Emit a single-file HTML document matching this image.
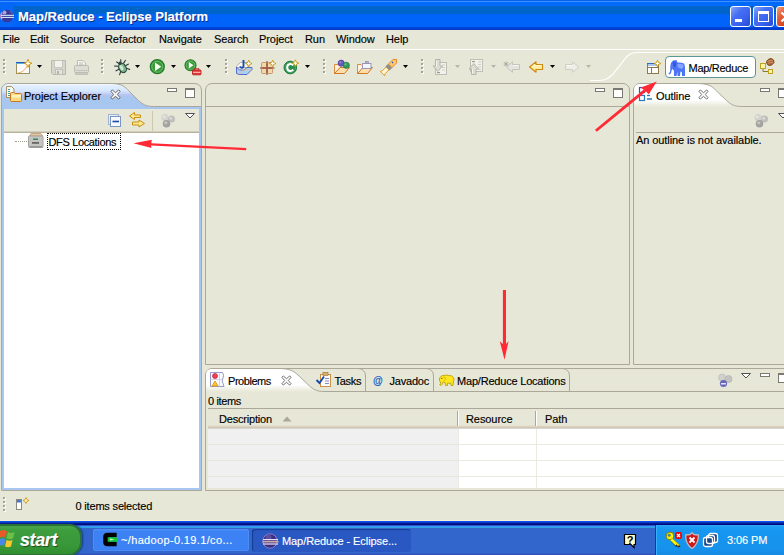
<!DOCTYPE html>
<html><head><meta charset="utf-8"><title>Map/Reduce - Eclipse Platform</title>
<style>
*{box-sizing:border-box;margin:0;padding:0}
html,body{width:784px;height:555px;overflow:hidden;background:#E6E7D6}
body{position:relative;font-family:"Liberation Sans",sans-serif;font-size:11px;color:#000;letter-spacing:-0.08px;-webkit-text-stroke-width:0.15px}
.a{position:absolute}
.t{position:absolute;white-space:nowrap;line-height:13px}
#title{left:0;top:0;width:784px;height:30px;background:linear-gradient(#0862F0 0,#0862F0 1px,#3C90FF 1px,#3C90FF 2.500px,#006AFA 2.500px,#006AFA 6px,#0065CB 6px,#0065CB 14.500px,#0063FA 14.500px,#0063FA 27px,#0046DC 27px,#0038C8 30px)}
#title .tt{left:18px;top:9px;font-family:"Liberation Sans",sans-serif;font-weight:bold;font-size:13px;color:#fff;line-height:16px;letter-spacing:0;text-shadow:1px 1px 0 #0A2A80}
#menu{left:0;top:30px;width:784px;height:19px;background:#E6E7D6}
#menuline{left:0;top:49px;width:784px;height:1px;background:#fff}
.pb{position:absolute;border:1px solid #ACA899;background:#E6E7D6}
</style></head><body>

<!-- title bar -->
<div id="title" class="a">
  <div class="a" style="left:0;top:2px;width:14px;height:25px;background:#0467F8"></div>
  <svg class="a" style="left:0;top:9px" width="16" height="16" viewBox="0 0 16 16"><circle cx="7" cy="7" r="6.300" fill="#38389A"/><path d="M2 3.500A6.300 6.300 0 0 0 2 10.500" fill="none" stroke="#D890C8" stroke-width="1.400"/><circle cx="4.500" cy="3.500" r="2" fill="#C8C0E0" opacity="0.800"/><rect x="1" y="5.800" width="13" height="1.100" fill="#D8ECF8"/><rect x="1" y="7.900" width="13" height="1.100" fill="#C8E4F4"/><path d="M10 2L12.500 4.500" stroke="#5C5CB8" stroke-width="1.500"/></svg>
  <div class="t tt">Map/Reduce - Eclipse Platform</div>
  <div class="a" style="left:730px;top:6px;width:21px;height:21px;border:1px solid #fff;border-radius:3px;background:linear-gradient(135deg,#86A6FA 0,#4670F2 35%,#3860EC 70%,#2448D0)"><div class="a" style="left:4px;top:12px;width:7px;height:3px;background:#fff"></div></div>
  <div class="a" style="left:753px;top:6px;width:21px;height:21px;border:1px solid #fff;border-radius:3px;background:linear-gradient(135deg,#86A6FA 0,#4670F2 35%,#3860EC 70%,#2448D0)"><div class="a" style="left:4px;top:4px;width:11px;height:11px;border:1px solid #fff;border-top-width:3px"></div></div>
  <div class="a" style="left:776px;top:6px;width:21px;height:21px;border:1px solid #fff;border-radius:3px;background:linear-gradient(135deg,#F0A080 0,#E05C38 35%,#D04420 70%,#B03010)"><svg class="a" style="left:3px;top:4px" width="12" height="12" viewBox="0 0 12 12"><path d="M1.500 1.500L10.500 10.500M10.500 1.500L1.500 10.500" stroke="#fff" stroke-width="2.200"/></svg></div>
</div>

<!-- menu -->
<div id="menu" class="a">
  <div class="t" style="left:2.5px;top:3px">File</div>
  <div class="t" style="left:30px;top:3px">Edit</div>
  <div class="t" style="left:60px;top:3px">Source</div>
  <div class="t" style="left:105px;top:3px">Refactor</div>
  <div class="t" style="left:159px;top:3px">Navigate</div>
  <div class="t" style="left:214px;top:3px">Search</div>
  <div class="t" style="left:259px;top:3px">Project</div>
  <div class="t" style="left:305px;top:3px">Run</div>
  <div class="t" style="left:336px;top:3px">Window</div>
  <div class="t" style="left:386px;top:3px">Help</div>
</div>
<div id="menuline" class="a"></div>

<!-- toolbar -->
<div class="a" style="left:4px;top:60px;width:2px;height:2px;background:#fff"></div><div class="a" style="left:3px;top:59px;width:2px;height:2px;background:#A5A293"></div><div class="a" style="left:4px;top:64px;width:2px;height:2px;background:#fff"></div><div class="a" style="left:3px;top:63px;width:2px;height:2px;background:#A5A293"></div><div class="a" style="left:4px;top:68px;width:2px;height:2px;background:#fff"></div><div class="a" style="left:3px;top:67px;width:2px;height:2px;background:#A5A293"></div><div class="a" style="left:4px;top:72px;width:2px;height:2px;background:#fff"></div><div class="a" style="left:3px;top:71px;width:2px;height:2px;background:#A5A293"></div>
<div class="a" style="left:102px;top:60px;width:2px;height:2px;background:#fff"></div><div class="a" style="left:101px;top:59px;width:2px;height:2px;background:#A5A293"></div><div class="a" style="left:102px;top:64px;width:2px;height:2px;background:#fff"></div><div class="a" style="left:101px;top:63px;width:2px;height:2px;background:#A5A293"></div><div class="a" style="left:102px;top:68px;width:2px;height:2px;background:#fff"></div><div class="a" style="left:101px;top:67px;width:2px;height:2px;background:#A5A293"></div><div class="a" style="left:102px;top:72px;width:2px;height:2px;background:#fff"></div><div class="a" style="left:101px;top:71px;width:2px;height:2px;background:#A5A293"></div>
<div class="a" style="left:226px;top:60px;width:2px;height:2px;background:#fff"></div><div class="a" style="left:225px;top:59px;width:2px;height:2px;background:#A5A293"></div><div class="a" style="left:226px;top:64px;width:2px;height:2px;background:#fff"></div><div class="a" style="left:225px;top:63px;width:2px;height:2px;background:#A5A293"></div><div class="a" style="left:226px;top:68px;width:2px;height:2px;background:#fff"></div><div class="a" style="left:225px;top:67px;width:2px;height:2px;background:#A5A293"></div><div class="a" style="left:226px;top:72px;width:2px;height:2px;background:#fff"></div><div class="a" style="left:225px;top:71px;width:2px;height:2px;background:#A5A293"></div>
<div class="a" style="left:324px;top:60px;width:2px;height:2px;background:#fff"></div><div class="a" style="left:323px;top:59px;width:2px;height:2px;background:#A5A293"></div><div class="a" style="left:324px;top:64px;width:2px;height:2px;background:#fff"></div><div class="a" style="left:323px;top:63px;width:2px;height:2px;background:#A5A293"></div><div class="a" style="left:324px;top:68px;width:2px;height:2px;background:#fff"></div><div class="a" style="left:323px;top:67px;width:2px;height:2px;background:#A5A293"></div><div class="a" style="left:324px;top:72px;width:2px;height:2px;background:#fff"></div><div class="a" style="left:323px;top:71px;width:2px;height:2px;background:#A5A293"></div>
<div class="a" style="left:422px;top:60px;width:2px;height:2px;background:#fff"></div><div class="a" style="left:421px;top:59px;width:2px;height:2px;background:#A5A293"></div><div class="a" style="left:422px;top:64px;width:2px;height:2px;background:#fff"></div><div class="a" style="left:421px;top:63px;width:2px;height:2px;background:#A5A293"></div><div class="a" style="left:422px;top:68px;width:2px;height:2px;background:#fff"></div><div class="a" style="left:421px;top:67px;width:2px;height:2px;background:#A5A293"></div><div class="a" style="left:422px;top:72px;width:2px;height:2px;background:#fff"></div><div class="a" style="left:421px;top:71px;width:2px;height:2px;background:#A5A293"></div>
<svg class="a" style="left:37px;top:65px" width="5" height="3" viewBox="0 0 5 3"><path d="M0 0H5L2.500 3Z" fill="#000"/></svg>
<svg class="a" style="left:135px;top:65px" width="5" height="3" viewBox="0 0 5 3"><path d="M0 0H5L2.500 3Z" fill="#000"/></svg>
<svg class="a" style="left:171px;top:65px" width="5" height="3" viewBox="0 0 5 3"><path d="M0 0H5L2.500 3Z" fill="#000"/></svg>
<svg class="a" style="left:206px;top:65px" width="5" height="3" viewBox="0 0 5 3"><path d="M0 0H5L2.500 3Z" fill="#000"/></svg>
<svg class="a" style="left:305px;top:65px" width="5" height="3" viewBox="0 0 5 3"><path d="M0 0H5L2.500 3Z" fill="#000"/></svg>
<svg class="a" style="left:403px;top:65px" width="5" height="3" viewBox="0 0 5 3"><path d="M0 0H5L2.500 3Z" fill="#000"/></svg>
<svg class="a" style="left:550px;top:65px" width="5" height="3" viewBox="0 0 5 3"><path d="M0 0H5L2.500 3Z" fill="#000"/></svg>
<svg class="a" style="left:455px;top:65px" width="5" height="3" viewBox="0 0 5 3"><path d="M0 0H5L2.500 3Z" fill="#B8B5A8"/></svg>
<svg class="a" style="left:491px;top:65px" width="5" height="3" viewBox="0 0 5 3"><path d="M0 0H5L2.500 3Z" fill="#B8B5A8"/></svg>
<svg class="a" style="left:586px;top:65px" width="5" height="3" viewBox="0 0 5 3"><path d="M0 0H5L2.500 3Z" fill="#B8B5A8"/></svg>
<svg class="a" style="left:15px;top:58px" width="18" height="18" viewBox="0 0 18 18"><rect x="1.500" y="4.500" width="13" height="11" fill="#FAFAFF" stroke="#9A9060"/><rect x="1" y="4" width="14" height="1" fill="#2A58B8"/><rect x="1" y="5" width="14" height="1" fill="#58B0D8"/><path d="M3 15Q10 14 12.500 7" fill="none" stroke="#F0B850" stroke-width="1"/><path d="M13 1.300L14.100 4.200L17 5.300L14.100 6.400L13 9.300L11.900 6.400L9 5.300L11.900 4.200Z" fill="#FFE890" stroke="#D09818" stroke-width="1"/><path d="M13 3.300V7.300M11 5.300H15" stroke="#fff" stroke-width="1"/></svg>
<svg class="a" style="left:50px;top:59px" width="17" height="17" viewBox="0 0 17 17"><path d="M1.500 1.500H15.500V15.500H3L1.500 14Z" fill="#D6D6CE" stroke="#B8B8AE"/><rect x="4.500" y="1.500" width="8" height="7" fill="#F2F2EC" stroke="#C0C0B6" stroke-width="0.800"/><rect x="5.500" y="10.500" width="7" height="5" fill="#E4E4DC" stroke="#B8B8AE" stroke-width="0.800"/><rect x="7" y="12" width="2" height="3" fill="#B4B4AA"/></svg>
<svg class="a" style="left:73px;top:59px" width="17" height="17" viewBox="0 0 17 17"><path d="M4.500 7V1.500H10L12.500 4V7" fill="#F6F6F0" stroke="#BCBCB2"/><rect x="1.500" y="6.500" width="14" height="7" rx="1" fill="#DCDCD4" stroke="#BCBCB2"/><rect x="2.500" y="13.500" width="12" height="2" fill="#CACAC2" stroke="#BCBCB2" stroke-width="0.800"/><path d="M6 4H10M6 5.800H10.500" stroke="#B0B0A6" stroke-width="0.800"/><rect x="2.500" y="11" width="12" height="1" fill="#C4C4BA"/></svg>
<svg class="a" style="left:113px;top:58px" width="18" height="18" viewBox="0 0 18 18"><g transform="rotate(-28 9 9)"><g stroke="#1C2A30" stroke-width="1" fill="none"><path d="M6 6.500L2.500 4.500M5.500 9.500H1.500M6 12L3 15M12 6.500L15.500 4.500M12.500 9.500H16.500M12 12L15 15M7.800 4.500L6.500 1.500M10.200 4.500L11.500 1.500"/></g><ellipse cx="9" cy="10" rx="3.600" ry="5" fill="#78B088" stroke="#24443A"/><ellipse cx="8.300" cy="9.500" rx="1.600" ry="2.800" fill="#D0ECD0"/><circle cx="9" cy="4.800" r="1.700" fill="#2C4838"/></g></svg>
<svg class="a" style="left:149px;top:58px" width="17" height="17" viewBox="0 0 17 17"><circle cx="8.300" cy="8.700" r="7" fill="#399A3A" stroke="#24782A" stroke-width="1.200"/><circle cx="8.300" cy="8.700" r="5.500" fill="none" stroke="#6CBC68" stroke-width="1"/><path d="M6 4.400L12.300 8.700L6 13Z" fill="#F4FFF0"/></svg>
<svg class="a" style="left:183px;top:58px" width="20" height="18" viewBox="0 0 20 18"><circle cx="7.500" cy="7.200" r="5.500" fill="#399A3A" stroke="#24782A" stroke-width="1.100"/><circle cx="7.500" cy="7.200" r="4.100" fill="none" stroke="#6CBC68" stroke-width="0.900"/><path d="M5.800 4L10.500 7.200L5.800 10.400Z" fill="#F4FFF0"/><rect x="9.500" y="12" width="8.500" height="4.800" rx="0.800" fill="#E03838" stroke="#B82020" stroke-width="0.900"/><path d="M11.800 12V10.700H15.700V12" fill="none" stroke="#C02828" stroke-width="1.100"/><rect x="10" y="13.800" width="7.500" height="1" fill="#FFC8C8"/></svg>
<svg class="a" style="left:235px;top:58px" width="19" height="18" viewBox="0 0 19 18"><path d="M1.500 8L5.500 4.500H13V9.500H1.500Z" fill="#FFFBE8" stroke="#9AA0B8" stroke-width="0.800"/><path d="M1.500 9V15.500L4 16.500H12L17 11.500V9.500H12L9 12H4.500L1.500 9Z" fill="#A8D0F4" stroke="#4A60C8" stroke-width="0.900"/><path d="M3.500 16L8.500 12H16.500" fill="none" stroke="#E8C080" stroke-width="0.800"/><path d="M8.500 2V8Q8.500 9.800 6.800 9.800Q5.300 9.800 5.300 8.300" fill="none" stroke="#1C4CB0" stroke-width="1.900"/><path d="M13.7 2.2L14.6 4.6L17.0 5.5L14.6 6.4L13.7 8.8L12.799999999999999 6.4L10.399999999999999 5.5L12.799999999999999 4.6Z" fill="#FFE478" stroke="#C89818" stroke-width="1"/><path d="M13.7 3.7V7.3M11.899999999999999 5.5H15.5" stroke="#fff" stroke-width="1"/></svg>
<svg class="a" style="left:259px;top:58px" width="19" height="18" viewBox="0 0 19 18"><rect x="2.500" y="4.500" width="5" height="5" rx="1" fill="#F0D8A8" stroke="#C09060" stroke-width="0.900"/><rect x="8.500" y="4.500" width="5" height="5" rx="1" fill="#F0D8A8" stroke="#C09060" stroke-width="0.900"/><rect x="2.500" y="10.500" width="5" height="5" rx="1" fill="#F0D8A8" stroke="#C09060" stroke-width="0.900"/><rect x="8.500" y="10.500" width="5" height="5" rx="1" fill="#F0D8A8" stroke="#C09060" stroke-width="0.900"/><path d="M8 3V17M1 10H15.500" stroke="#8A3030" stroke-width="1"/><path d="M13.7 2.2L14.6 4.6L17.0 5.5L14.6 6.4L13.7 8.8L12.799999999999999 6.4L10.399999999999999 5.5L12.799999999999999 4.6Z" fill="#FFE478" stroke="#C89818" stroke-width="1"/><path d="M13.7 3.7V7.3M11.899999999999999 5.5H15.5" stroke="#fff" stroke-width="1"/></svg>
<svg class="a" style="left:282px;top:58px" width="20" height="18" viewBox="0 0 20 18"><circle cx="8.300" cy="9.500" r="6.300" fill="#2C8E4C" stroke="#1E7A3C" stroke-width="1"/><circle cx="8.300" cy="9.500" r="5" fill="none" stroke="#58B474" stroke-width="0.800"/><path d="M11.300 7.300Q10 5.800 8.200 5.900Q5.200 6.200 5.200 9.500Q5.200 12.800 8.200 13.100Q10 13.200 11.300 11.700" fill="none" stroke="#fff" stroke-width="2"/><path d="M13.4 1.9000000000000004L14.3 4.3L16.7 5.2L14.3 6.1000000000000005L13.4 8.5L12.5 6.1000000000000005L10.100000000000001 5.2L12.5 4.3Z" fill="#FFE478" stroke="#C89818" stroke-width="1"/><path d="M13.4 3.4000000000000004V7.0M11.6 5.2H15.200000000000001" stroke="#fff" stroke-width="1"/></svg>
<svg class="a" style="left:333px;top:58px" width="19" height="18" viewBox="0 0 19 18"><path d="M1.500 15.500V6.500H5L6 7.500H12.500V10H7Z" fill="#FFF2D8" stroke="#D88030" stroke-width="0.900"/><path d="M1.500 15.500L7 9.500H16.500L11.500 15.500Z" fill="#FFDCA8" stroke="#D07828" stroke-width="1"/><circle cx="8.200" cy="5.200" r="3.100" fill="#6A58B8" stroke="#4A3C98" stroke-width="0.700"/><circle cx="7.400" cy="4.300" r="1.100" fill="#9888D8"/><circle cx="13.300" cy="7.300" r="3.100" fill="#2E9A58" stroke="#1E7A40" stroke-width="0.700"/><circle cx="12.500" cy="6.400" r="1.100" fill="#68C088"/></svg>
<svg class="a" style="left:356px;top:58px" width="19" height="18" viewBox="0 0 19 18"><path d="M1.500 15.500V6.500H5L6 7.500H12.500V10H7Z" fill="#FFF2D8" stroke="#D88030" stroke-width="0.900"/><path d="M1.500 15.500L7 9.500H16.500L11.500 15.500Z" fill="#FFDCA8" stroke="#D07828" stroke-width="1"/><rect x="6.500" y="5.500" width="8.500" height="5" fill="#F4F4FF" stroke="#9090B8" stroke-width="0.900"/><rect x="9.300" y="3.300" width="3" height="2.200" fill="#B0B0D0" stroke="#8888B0" stroke-width="0.600"/></svg>
<svg class="a" style="left:380px;top:57px" width="19" height="19" viewBox="0 0 19 19"><g transform="rotate(-45 9.500 9.500)"><path d="M-0.500 6.500L1.500 7.500H7V11.500H1.500L-0.500 12.500Z" fill="#FFF8D0" stroke="#E09020" stroke-width="0.900"/><rect x="7" y="7" width="3.500" height="5" fill="#909090" stroke="#707070" stroke-width="0.600"/><path d="M10.500 7H17L19.500 9.500L17 12H10.500Z" fill="#FFC878" stroke="#E08818" stroke-width="0.900"/><circle cx="14.500" cy="8.800" r="0.800" fill="#2050C0"/></g></svg>
<svg class="a" style="left:432px;top:58px" width="18" height="18" viewBox="0 0 18 18"><rect x="3.500" y="4.500" width="11" height="12" fill="#F2F2EC" stroke="#BEBEB4"/><path d="M10 7H13M10 9.500H13M10 12H13" stroke="#C8C8BE" stroke-width="0.900"/><rect x="5" y="14" width="3" height="1.200" fill="#9A9A90"/><path d="M3.500 1.500H8V8H10.500L5.800 13.500L1 8H3.500Z" fill="#DCDCD4" stroke="#B0B0A4" stroke-width="0.900"/><path d="M4.500 2.500V8.500" stroke="#F4F4EE" stroke-width="1"/></svg>
<svg class="a" style="left:468px;top:58px" width="18" height="18" viewBox="0 0 18 18"><rect x="2.500" y="1.500" width="12" height="12" fill="#F2F2EC" stroke="#BEBEB4"/><path d="M10 4H13M10 6.500H13M10 9H13M10 11.500H13" stroke="#C8C8BE" stroke-width="0.900"/><rect x="4" y="3" width="3" height="1.200" fill="#9A9A90"/><path d="M3.500 16.500H8V11H10.500L5.800 5.500L1 11H3.500Z" fill="#DCDCD4" stroke="#B0B0A4" stroke-width="0.900"/><path d="M4.500 15.500V10.500" stroke="#F4F4EE" stroke-width="1"/></svg>
<svg class="a" style="left:502px;top:59px" width="20" height="16" viewBox="0 0 20 16"><path d="M17.500 5.500H10.500V2.800L4.300 8L10.500 13.200V10.500H17.500Z" fill="#E4E4DE" stroke="#C4C4BA" stroke-width="1" stroke-linejoin="round"/><path d="M10.500 6.500H16.500" stroke="#F6F6F2" stroke-width="1"/><path d="M2 3L6 7M6 3L2 7M4 2.500V7.500M1.500 5H6.500" stroke="#A4A49A" stroke-width="0.700"/></svg>
<svg class="a" style="left:527px;top:59px" width="18" height="16" viewBox="0 0 18 16"><defs><linearGradient id="yg" x1="0" y1="0" x2="0" y2="1"><stop offset="0" stop-color="#FFFDF0"/><stop offset="0.500" stop-color="#FFF0A8"/><stop offset="1" stop-color="#FFD860"/></linearGradient></defs><path d="M15.500 5.500H9V2.800L2.600 8L9 13.200V10.500H15.500Z" fill="url(#yg)" stroke="#D08A10" stroke-width="1.200" stroke-linejoin="round"/></svg>
<svg class="a" style="left:564px;top:59px" width="18" height="16" viewBox="0 0 18 16"><path d="M1.500 5.500H8.500V2.800L14.900 8L8.500 13.200V10.500H1.500Z" fill="#EEEEE8" stroke="#CECEC4" stroke-width="1" stroke-linejoin="round"/><path d="M2.500 6.500H9" stroke="#FAFAF6" stroke-width="1"/></svg>
<svg class="a" style="left:585px;top:50px" width="199" height="34" viewBox="0 0 199 34"><path d="M5 30.500H14C22 30.500 25 27 28 24L42 6.500C45 3.500 47 2.500 52 2.500H199" fill="none" stroke="#fff" stroke-width="1.200"/></svg>
<svg class="a" style="left:644px;top:58px" width="18" height="18" viewBox="0 0 18 18"><rect x="3.500" y="5.500" width="11" height="10" fill="#FCFCF8" stroke="#8A7850"/><path d="M3.500 9.500H14.500M7.500 9.500V15.500" stroke="#8A7850" stroke-width="1"/><rect x="3" y="5" width="12" height="1" fill="#3868C0"/><rect x="4" y="6" width="10" height="2" fill="#A8C8F0"/><path d="M13.5 2.2L14.4 4.6L16.8 5.5L14.4 6.4L13.5 8.8L12.6 6.4L10.2 5.5L12.6 4.6Z" fill="#FFE478" stroke="#C89818" stroke-width="1"/><path d="M13.5 3.7V7.3M11.7 5.5H15.3" stroke="#fff" stroke-width="1"/></svg>
<div class="a" style="left:665px;top:56px;width:91px;height:22px;border:1px solid #5C9698;border-radius:4px;background:#fff"></div>
<svg class="a" style="left:668px;top:59px" width="19" height="18" viewBox="0 0 19 18"><path d="M5 1.500L8.500 1L9.500 3.500Q13 3 16 4.500Q17.500 7 17 11L17 17H14L13.800 13L12.500 12.500L12 17H9.500L9.300 12.500L8.500 17H6L6 11.500Q4.500 11 4.200 9.500Q3.500 12 2.800 14.500L1 15.500L0.500 14.500L2 13Q2.500 10 2.300 7Q2.500 3.500 5 1.500Z" fill="#4C74F6"/><path d="M5 3Q7.500 1.500 8 4.500Q8.500 7.500 6.500 8.500Q4.500 7 5 3Z" fill="#3058E8"/><path d="M9.500 5Q13 4 15.500 6Q16 8.500 14 10Q11 9.500 9.500 8Z" fill="#86A4FF"/><circle cx="4" cy="7" r="0.700" fill="#A08888"/></svg>
<div class="t" style="left:688.500px;top:62px;letter-spacing:-0.280px">Map/Reduce</div>
<svg class="a" style="left:759px;top:58px" width="18" height="18" viewBox="0 0 18 18"><path d="M4 8V13.500H9.500" fill="none" stroke="#8A7A30" stroke-width="1"/><rect x="1.500" y="5.500" width="5" height="5" fill="#FFF4A8" stroke="#C0A020"/><rect x="9.500" y="11.500" width="4" height="4" fill="#FFF4A8" stroke="#C0A020"/><ellipse cx="11.300" cy="4" rx="3.800" ry="3.300" transform="rotate(-30 11.300 4)" fill="#A86838" stroke="#784018" stroke-width="0.800"/><path d="M8.500 3.500Q11 1.500 14 3M8.800 5.500Q11.500 3.500 14.300 5" stroke="#E0A878" stroke-width="0.700" fill="none"/></svg>

<!-- left panel: Project Explorer -->
<div class="a" style="left:1px;top:83px;width:201px;height:408px;border:1px solid #ACA899;border-radius:7px 7px 0 0;background:#A7C6F0"></div>
<div class="a" style="left:2px;top:84px;width:199px;height:25px;border-radius:6px 6px 0 0;background:linear-gradient(#fff 0,#E4F0FF 1px,#D4E6FF 7px,#C8D4F8 9px,#B8C4F0 11px,#A7C6F0 13px)"></div>
<svg class="a" style="left:110px;top:83px" width="92" height="25" viewBox="0 0 92 25"><path d="M0 0.500C10 0.500 14 2.500 17.500 6.500L28.500 17.500C32.500 21 35.500 23.500 43.500 23.500H92V0H0Z" fill="#E6E7D6"/><path d="M0 0.500C10 0.500 14 2.500 17.500 6.500L28.500 17.500C32.500 21 35.500 23.500 43.500 23.500H91" fill="none" stroke="#ACA899" stroke-width="1"/><path d="M0 0.500H84Q91.500 0.500 91.500 8V25" fill="none" stroke="#ACA899"/></svg>
<div class="a" style="left:4px;top:109px;width:195px;height:24px;background:linear-gradient(#E6E7D6 0,#E6E7D6 22px,#D2D0BC 22px,#D2D0BC 23px,#B6B39E 23px)"></div>
<div class="a" style="left:4px;top:133px;width:195px;height:355px;background:#fff"></div>
<svg class="a" style="left:5px;top:85px" width="18" height="18" viewBox="0 0 18 18"><path d="M1.500 1.500H6.500L9 4V12.500H1.500Z" fill="#FAFAF0" stroke="#A08850" stroke-width="0.900"/><path d="M3 4.500H5M3 6.500H5M3 8.500H5M3 10.500H5" stroke="#3AA0B8" stroke-width="1"/><path d="M5.500 8.500Q5.500 7.500 6.500 7.500H9L10 8.500H15.500Q16.500 8.500 16.500 9.500V15.500Q16.500 16.500 15.500 16.500H6.500Q5.500 16.500 5.500 15.500Z" fill="#FFD880" stroke="#C87818" stroke-width="1"/><rect x="6.500" y="10" width="9.500" height="2.500" fill="#FFF4C0"/></svg>
<div class="t" style="left:24px;top:90px">Project Explorer</div>
<svg class="a" style="left:109.5px;top:89px" width="11" height="11" viewBox="0 0 12 12"><path d="M1 2.500L2.500 1L6 4L9.500 1L11 2.500L8 6L11 9.500L9.500 11L6 8L2.500 11L1 9.500L4 6Z" fill="#fff" stroke="#555" stroke-width="1"/></svg>
<div class="a" style="left:167px;top:88px;width:10px;height:4px;border:1px solid #7A7870;background:#fff"></div>
<div class="a" style="left:185px;top:88px;width:10px;height:10px;border:1px solid #7A7870;border-top-width:2px;background:#fff"></div>
<!-- panel toolbar -->
<svg class="a" style="left:107px;top:113px" width="16" height="15" viewBox="0 0 16 15"><rect x="1.500" y="1.500" width="10" height="10" fill="#E4ECF8" stroke="#A0B4D0"/><rect x="3.500" y="3.500" width="10" height="10" fill="#F6FAFF" stroke="#7C96C0"/><rect x="5.500" y="7.700" width="6.500" height="1.600" fill="#1848A8"/></svg>
<svg class="a" style="left:128px;top:111px" width="18" height="18" viewBox="0 0 18 18"><path d="M12.500 4H6.500V1.500L1.500 5L6.500 8.500V6.500H12.500Z" fill="#FFE890" stroke="#C8900C" stroke-width="1"/><path d="M4.500 11H11V9L16.500 12.500L11 16V14H4.500Z" fill="#FFE890" stroke="#C8900C" stroke-width="1"/></svg>
<div class="a" style="left:152px;top:111px;width:1px;height:20px;background:#CDC8A8"></div>
<svg class="a" style="left:160px;top:113px" width="16" height="16" viewBox="0 0 16 16"><circle cx="5" cy="4.500" r="3.500" fill="#D2D2CE"/><circle cx="4.200" cy="3.700" r="1.500" fill="#E4E4E0"/><circle cx="11.500" cy="6" r="3.500" fill="#BEBEBA"/><circle cx="10.800" cy="5.200" r="1.500" fill="#D8D8D4"/><circle cx="6.500" cy="10.800" r="3.800" fill="#A2A29E"/><circle cx="5.800" cy="9.800" r="1.600" fill="#C4C4C0"/></svg>
<svg class="a" style="left:185px;top:112px" width="10" height="7" viewBox="0 0 10 7"><path d="M0.500 1.500H9.500L5 6Z" fill="#fff" stroke="#505050" stroke-width="1"/></svg>
<!-- tree -->
<div class="a" style="left:15px;top:141px;width:12px;height:0;border-top:1px dotted #A0A090"></div>
<svg class="a" style="left:27px;top:132px" width="18" height="18" viewBox="0 0 18 18"><path d="M2.500 4L4 1.500H14L15.500 4Z" fill="#E8C8A0" stroke="#B89870" stroke-width="0.800"/><rect x="1.500" y="4" width="14.500" height="11.500" rx="1" fill="#C4C4C0" stroke="#A4A4A0"/><rect x="2.500" y="14" width="12.500" height="1.500" fill="#989894"/><rect x="6" y="6.500" width="5" height="1.500" fill="#38885A"/><rect x="5" y="10" width="7" height="1.800" fill="#666"/></svg>
<div class="t" style="left:48.500px;top:136px;letter-spacing:-0.350px">DFS Locations</div>
<div class="a" style="left:47px;top:133px;width:74px;height:17px;border:1px dotted #000"></div>

<!-- editor area -->
<div class="pb" style="left:205px;top:83px;width:425px;height:282px;border-radius:7px 7px 0 0"></div>
<div class="a" style="left:206px;top:106px;width:423px;height:1px;background:#ACA899"></div>
<div class="a" style="left:595px;top:88px;width:10px;height:4px;border:1px solid #7A7870;background:#fff"></div>
<div class="a" style="left:613px;top:88px;width:10px;height:10px;border:1px solid #7A7870;border-top-width:2px;background:#fff"></div>

<!-- outline -->
<div class="pb" style="left:633px;top:83px;width:160px;height:282px;border-radius:7px 0 0 0"></div>
<svg class="a" style="left:634px;top:83px" width="150" height="25" viewBox="0 0 150 25"><defs><linearGradient id="wg" x1="0" y1="0" x2="0" y2="1"><stop offset="0" stop-color="#fff"/><stop offset="0.680" stop-color="#fff"/><stop offset="1" stop-color="#E6E7D6"/></linearGradient></defs><path d="M0 24V7Q0 1 6 1H63C73 1 77.500 2.500 81.500 7L92.500 17.500C96.500 21 99.500 23.500 107.500 23.500V24Z" fill="url(#wg)"/><path d="M63 0.500C73 0.500 77.500 2.500 81.500 7L92.500 17.500C96.500 21 99.500 23.500 107.500 23.500H150" fill="none" stroke="#ACA899" stroke-width="1"/></svg>
<svg class="a" style="left:638px;top:86px" width="16" height="16" viewBox="0 0 16 16"><rect x="1.500" y="1.500" width="5" height="5" fill="#fff" stroke="#2858B0" stroke-width="1.200"/><rect x="1.500" y="9.500" width="5" height="5" fill="#fff" stroke="#2878B8" stroke-width="1.200"/><path d="M9 2.500H14M9 6H12M9 13H14" stroke="#2878B8" stroke-width="1.300"/><path d="M9 9.500H12" stroke="#2878B8" stroke-width="1.300"/></svg>
<div class="t" style="left:656px;top:90px">Outline</div>
<svg class="a" style="left:697.5px;top:88.5px" width="11" height="11" viewBox="0 0 12 12"><path d="M1 2.500L2.500 1L6 4L9.500 1L11 2.500L8 6L11 9.500L9.500 11L6 8L2.500 11L1 9.500L4 6Z" fill="#fff" stroke="#666" stroke-width="1"/></svg>
<div class="a" style="left:760px;top:88px;width:10px;height:4px;border:1px solid #7A7870;background:#fff"></div>
<div class="a" style="left:778px;top:88px;width:10px;height:10px;border:1px solid #7A7870;border-top-width:2px;background:#fff"></div>
<svg class="a" style="left:753px;top:113px" width="16" height="16" viewBox="0 0 16 16"><circle cx="5" cy="4.500" r="3.500" fill="#D2D2CE"/><circle cx="4.200" cy="3.700" r="1.500" fill="#E4E4E0"/><circle cx="11.500" cy="6" r="3.500" fill="#BEBEBA"/><circle cx="10.800" cy="5.200" r="1.500" fill="#D8D8D4"/><circle cx="6.500" cy="10.800" r="3.800" fill="#A2A29E"/><circle cx="5.800" cy="9.800" r="1.600" fill="#C4C4C0"/></svg>
<svg class="a" style="left:778px;top:112px" width="10" height="7" viewBox="0 0 10 7"><path d="M0.500 1.500H9.500L5 6Z" fill="#fff" stroke="#505050" stroke-width="1"/></svg>
<div class="a" style="left:636px;top:132px;width:148px;height:1px;background:#ACA899"></div>
<div class="t" style="left:636px;top:134px">An outline is not available.</div>

<!-- bottom panel -->
<div class="pb" style="left:205px;top:368px;width:590px;height:123px;border-radius:7px 0 0 0"></div>
<svg class="a" style="left:206px;top:368px" width="578" height="25" viewBox="0 0 578 25"><path d="M0 24V7Q0 1 6 1H73C83 1 87 2.500 92 7L103 17.500C107 21 110 23.500 118 23.500V24Z" fill="url(#wg)"/><path d="M73 0.500C83 0.500 87 2.500 92 7L103 17.500C107 21 110 23.500 118 23.500H578" fill="none" stroke="#ACA899" stroke-width="1"/><path d="M152 0.500Q159.500 1 159.500 8V23M220 0.500Q227.500 1 227.500 8V23M356 0.500Q363.500 1 363.500 8V23" fill="none" stroke="#ACA899"/></svg>
<svg class="a" style="left:209px;top:371px" width="17" height="18" viewBox="0 0 17 18"><path d="M1.500 1.500H13.500Q15.500 4 14 7Q12.500 10 14 12.500L15 15.500H1.500Z" fill="#FAFAFF" stroke="#8890C0" stroke-width="0.900"/><path d="M1.500 8.500H13M10.500 1.500V15.500" stroke="#C8CCE0" stroke-width="0.800"/><circle cx="6" cy="5" r="2.500" fill="#F04058" stroke="#C02030" stroke-width="0.700"/><path d="M6 10L9 15H3Z" fill="#FFC830" stroke="#D89010" stroke-width="0.800"/></svg>
<div class="t" style="left:228px;top:375px;letter-spacing:-0.450px">Problems</div>
<svg class="a" style="left:280.5px;top:374.5px" width="11" height="11" viewBox="0 0 12 12"><path d="M1 2.500L2.500 1L6 4L9.500 1L11 2.500L8 6L11 9.500L9.500 11L6 8L2.500 11L1 9.500L4 6Z" fill="#fff" stroke="#666" stroke-width="1"/></svg>
<svg class="a" style="left:315px;top:371px" width="18" height="17" viewBox="0 0 18 17"><rect x="5.500" y="3.500" width="10" height="12" fill="#FCFCFF" stroke="#C89048" stroke-width="1"/><rect x="8" y="1.500" width="5" height="3" fill="#D8B070" stroke="#A87830" stroke-width="0.700"/><path d="M10 7.500H14M10 10H14M10 12.500H14" stroke="#7080B0" stroke-width="0.900"/><path d="M1.500 9L4.500 12L9 5.500" fill="none" stroke="#1848B0" stroke-width="1.800"/></svg>
<div class="t" style="left:334.500px;top:375px;letter-spacing:-0.250px">Tasks</div>
<div class="t" style="left:373px;top:374px;color:#1C64C8;font-size:10px;font-weight:bold;letter-spacing:0">@</div>
<div class="t" style="left:389.500px;top:375px;letter-spacing:-0.200px">Javadoc</div>
<svg class="a" style="left:437px;top:372px" width="19" height="16" viewBox="0 0 19 16"><path d="M2.500 8.500Q1.500 5.500 4 4.500Q5 3 7.500 3.500Q9 2.500 11.500 3.500Q15 3 16.500 5.500Q17.500 7.500 16.500 9.500L16 13.500H14L13.700 11Q12 11.500 10.500 11.200L10.500 13.500H8.500L8 10.500Q6.500 10 5.500 10.500Q5.500 12.500 4 13.500L2.800 12.800Q4 11.500 3.500 10Q2.800 9.500 2.500 8.500Z" fill="#FFE61E" stroke="#B09800" stroke-width="0.800"/><path d="M6 5Q8.500 4.500 8.500 7.500Q8 9 6.500 9" fill="none" stroke="#C8B000" stroke-width="0.700"/><circle cx="4.800" cy="6.300" r="0.600" fill="#333"/></svg>
<div class="t" style="left:457px;top:375px;letter-spacing:-0.200px">Map/Reduce Locations</div>
<svg class="a" style="left:717px;top:373px" width="16" height="16" viewBox="0 0 16 16"><circle cx="5" cy="4.500" r="3.500" fill="#D0D0CC" stroke="#B8B8B4" stroke-width="0.600"/><circle cx="11.500" cy="6" r="3.500" fill="#C4C4C0" stroke="#ACACA8" stroke-width="0.600"/><circle cx="6.500" cy="10.500" r="3.600" fill="#6868B8"/><rect x="4" y="10" width="5" height="1.500" fill="#E0E0FF"/></svg>
<svg class="a" style="left:741px;top:372px" width="10" height="7" viewBox="0 0 10 7"><path d="M0.500 1.500H9.500L5 6Z" fill="#fff" stroke="#505050" stroke-width="1"/></svg>
<div class="a" style="left:760px;top:373px;width:10px;height:4px;border:1px solid #7A7870;background:#fff"></div>
<div class="a" style="left:778px;top:373px;width:10px;height:10px;border:1px solid #7A7870;border-top-width:2px;background:#fff"></div>
<div class="t" style="left:208px;top:395px;letter-spacing:-0.350px">0 items</div>
<div class="a" style="left:208px;top:408px;width:576px;height:1px;background:#ACA899"></div>
<div class="a" style="left:208px;top:409px;width:576px;height:20px;background:linear-gradient(#E6E7D6 0,#E6E7D6 16px,#E4D8C8 17px,#D4CDB8 18px,#C8C4B4 19px,#E8E8E8 20px)"></div>
<div class="a" style="left:208px;top:429px;width:250px;height:59px;background:repeating-linear-gradient(#F0F0F0 0,#F0F0F0 15px,#E6E5DE 15px,#E6E5DE 16px)"></div>
<div class="a" style="left:458px;top:429px;width:326px;height:59px;background:repeating-linear-gradient(#fff 0,#fff 15px,#EAE9E2 15px,#EAE9E2 16px)"></div>
<div class="a" style="left:457px;top:411px;width:1px;height:15px;background:#ACA899"></div><div class="a" style="left:458px;top:411px;width:1px;height:15px;background:#fff"></div>
<div class="a" style="left:535px;top:411px;width:1px;height:15px;background:#ACA899"></div><div class="a" style="left:536px;top:411px;width:1px;height:15px;background:#fff"></div>
<div class="a" style="left:458px;top:429px;width:1px;height:59px;background:#EAE9E2"></div>
<div class="a" style="left:536px;top:429px;width:1px;height:59px;background:#EAE9E2"></div>
<div class="t" style="left:219px;top:413px;letter-spacing:-0.200px">Description</div>
<svg class="a" style="left:282px;top:416px" width="10" height="6" viewBox="0 0 10 6"><path d="M0.500 5.500L5 0.500L9.500 5.500Z" fill="#ACA899"/></svg>
<div class="t" style="left:466px;top:413px">Resource</div>
<div class="t" style="left:545px;top:413px">Path</div>
<div class="a" style="left:206px;top:490px;width:578px;height:1px;background:#ACA899"></div>

<!-- red annotation arrows -->
<svg class="a" style="left:0;top:0;pointer-events:none" width="784" height="555" viewBox="0 0 784 555"><g fill="#FF2A36" stroke="none">
<path d="M246.300 148L246.100 150.300L151 145.400L151.500 148L133.500 143.200L151.800 139.800L151.300 143.200Z"/>
<path d="M595 129.800L596.800 131.800L646 91.500L648.800 94.300L656.800 81.500L640.300 87.800L643.800 89.500Z"/>
<path d="M502.900 290H506V344L508.600 341.200L504.500 359.800L499.800 341.200L502.900 344Z"/>
</g></svg>
<!-- status -->
<div class="a" style="left:4px;top:498px;width:2px;height:2px;background:#fff"></div><div class="a" style="left:3px;top:497px;width:2px;height:2px;background:#A5A293"></div>
<div class="a" style="left:4px;top:502px;width:2px;height:2px;background:#fff"></div><div class="a" style="left:3px;top:501px;width:2px;height:2px;background:#A5A293"></div>
<div class="a" style="left:4px;top:506px;width:2px;height:2px;background:#fff"></div><div class="a" style="left:3px;top:505px;width:2px;height:2px;background:#A5A293"></div>
<div class="a" style="left:4px;top:510px;width:2px;height:2px;background:#fff"></div><div class="a" style="left:3px;top:509px;width:2px;height:2px;background:#A5A293"></div>
<svg class="a" style="left:15px;top:497px" width="16" height="15" viewBox="0 0 16 15"><rect x="1.500" y="2.500" width="5" height="10" fill="#fff" stroke="#8A8A80" stroke-width="1"/><rect x="2" y="3" width="4" height="2.500" fill="#4A78D0"/><path d="M11 0.500L12 2.500L14 3.500L12 4.500L11 6.500L10 4.500L8 3.500L10 2.500Z" fill="#FFF4B0" stroke="#C89010" stroke-width="0.800"/></svg>
<div class="t" style="left:75.500px;top:500px;letter-spacing:-0.180px">0 items selected</div>

<!-- taskbar -->
<div class="a" style="left:0;top:520px;width:784px;height:35px;background:linear-gradient(#F4EED6 0px,#F4EED6 1px,#0A52F2 1px,#0A52F2 2px,#0838C4 2px,#0838C4 3px,#021A92 3px,#021A92 4px,#00087C 4px,#00087C 5px,#2E58C8 5px,#2E58C8 6px,#3399FF 6px,#3399FF 7px,#32A0DA 7px,#32A0DA 8px,#3366CC 8px,#3366CC 33px,#3248B0 35px)"></div>
<div class="a" style="left:-4px;top:524px;width:86px;height:32px;border-radius:0 12px 14px 0;border:2px solid #2A7038;background:linear-gradient(#4AA84A 0,#3E9E3E 4px,#38983A 18px,#309030 28px);box-shadow:1px 0 2px #123A80"></div>
<svg class="a" style="left:0;top:529px" width="16" height="20" viewBox="0 0 16 20"><path d="M0 2Q4 0 7 2.500L5.500 9Q3 7 0 8.500Z" fill="#E85828"/><path d="M8 3Q11 5 14.500 3L13 9.500Q10 11 6.500 9.500Z" fill="#6CC048"/><path d="M0 10Q3 8.500 5.500 10.500L4 17Q2 15.500 0 16.500Z" fill="#4888E8"/><path d="M6.500 11Q9.500 12.500 12.500 11L11 17.500Q8 19 5 17.500Z" fill="#F8C830"/></svg>
<div class="t" style="left:20px;top:528px;font-size:18px;font-weight:bold;font-style:italic;color:#fff;line-height:24px;letter-spacing:-0.400px;text-shadow:1px 1px 1px #1A4A1A">start</div>
<div class="a" style="left:93px;top:529px;width:156px;height:22px;border-radius:3px;background:linear-gradient(#5C9CFF 0,#3C82F4 2px,#3C82F4 20px,#3474E4 23px);box-shadow:inset 0 0 0 1px #4C8CF8"></div>
<svg class="a" style="left:101px;top:530px" width="19" height="19" viewBox="0 0 17 17"><path d="M14 2.500H6Q2 2.500 2 6V11Q2 14.500 6 14.500H14V10.500H7V6.500H14Z" fill="#000"/><rect x="6" y="6.500" width="9" height="4" fill="#18C838"/><path d="M8 7.500L12 8.500L8 9.500Z" fill="#C8FFC8"/></svg>
<div class="t" style="left:121px;top:534px;color:#fff;letter-spacing:0.350px">~/hadoop-0.19.1/co...</div>
<div class="a" style="left:252px;top:529px;width:159px;height:23px;border-radius:3px;background:#2A58C2;box-shadow:inset 1px 1px 1px #143C90"></div>
<svg class="a" style="left:262px;top:533px" width="17" height="16" viewBox="0 0 17 16"><circle cx="8" cy="8" r="7.200" fill="#3C2F80"/><circle cx="8" cy="8" r="7.200" fill="none" stroke="#9A8FD0" stroke-width="0.800"/><circle cx="6.500" cy="4.500" r="3" fill="#6A5CB0" opacity="0.700"/><rect x="1" y="6" width="15" height="1.200" fill="#E8E0F8"/><rect x="0.500" y="8.200" width="16" height="1.200" fill="#F0C8B0"/><rect x="1" y="10.400" width="15" height="1.200" fill="#E8E0F8"/></svg>
<div class="t" style="left:282px;top:535px;color:#fff">Map/Reduce - Eclipse...</div>
<svg class="a" style="left:623px;top:533px" width="14" height="16" viewBox="0 0 14 16"><path d="M1.500 1.500H12.500V11.500H11V14.500L8 11.500H1.500Z" fill="#FFFFD0" stroke="#000" stroke-width="1.200"/><text x="3.800" y="10.500" font-family="Liberation Sans, sans-serif" font-weight="bold" font-size="11" fill="#000">?</text></svg>
<div class="a" style="left:655px;top:525px;width:129px;height:30px;background:linear-gradient(#30A8F8 0,#1C9CF4 2px,#1696F0 6px,#1692EC 24px,#1488E0 31px);border-left:1px solid #0C3CA0;box-shadow:inset 1px 0 0 #38B0FF"></div>
<svg class="a" style="left:665px;top:531px" width="19" height="18" viewBox="0 0 19 18"><path d="M7.500 8L15.500 15.500L13.500 16.500L12 15L11 16L6 10.500Z" fill="#222"/><circle cx="5" cy="5" r="3.900" fill="#F8F010" stroke="#787000" stroke-width="0.900"/><circle cx="4.200" cy="4.200" r="1.300" fill="#1696F0" stroke="#787000" stroke-width="0.500"/><path d="M7 7L14.500 14L13 15L11.500 13.500L10.500 14.500L5.500 9.500Z" fill="#F8F010" stroke="#A09800" stroke-width="0.500"/><rect x="10" y="1" width="7" height="7" rx="2" fill="#E80808"/><path d="M12 3L15 6M15 3L12 6" stroke="#fff" stroke-width="1.200"/></svg>
<svg class="a" style="left:684px;top:532px" width="16" height="18" viewBox="0 0 16 18"><path d="M8 0.800L10 2.500L14.300 3Q14.800 11.500 8 16.500Q1.200 11.500 1.700 3L6 2.500Z" fill="#D01818" stroke="#B8B8C0" stroke-width="1.400"/><path d="M5.500 5.500L10.500 10.500M10.500 5.500L5.500 10.500" stroke="#fff" stroke-width="1.800"/></svg>
<svg class="a" style="left:702px;top:532px" width="18" height="17" viewBox="0 0 18 17"><rect x="6.500" y="1.500" width="9" height="9" rx="2" fill="#184888" stroke="#fff" stroke-width="1.300"/><rect x="1.500" y="5.500" width="9" height="9" rx="2" fill="#184888" stroke="#fff" stroke-width="1.300"/><rect x="4.500" y="3.500" width="8" height="8" rx="2" fill="none" stroke="#fff" stroke-width="1.300"/></svg>
<div class="t" style="left:727px;top:534px;color:#fff">3:06 PM</div>
</body></html>
